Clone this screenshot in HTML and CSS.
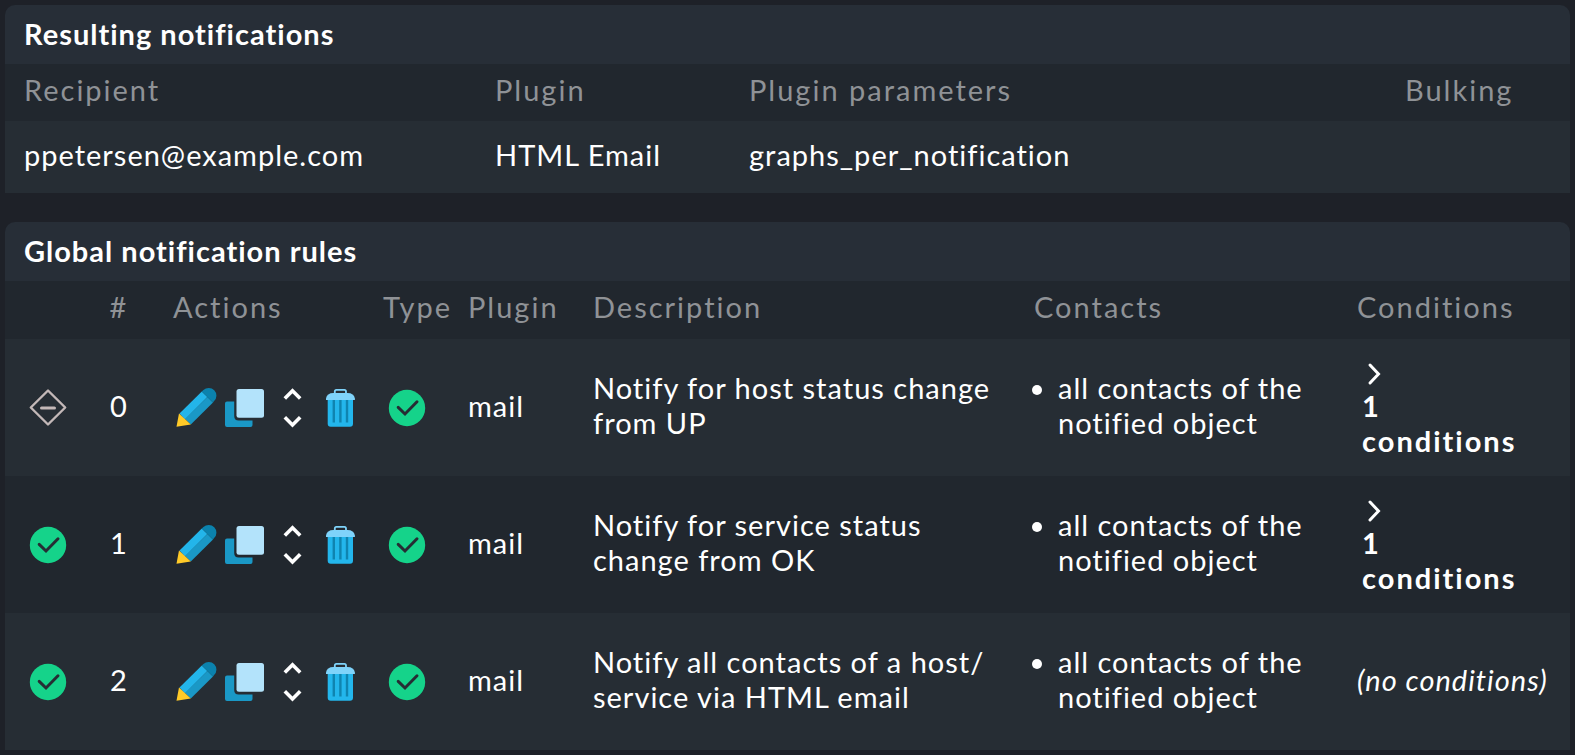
FILE: index.html
```
<!DOCTYPE html>
<html lang="en">
<head>
    <meta charset="UTF-8">
    <meta name="viewport" content="width=device-width, initial-scale=1.0">
    <title>Notification rules</title>
    <link rel="stylesheet" href="styles.css">
</head>
<body>

<!-- Icon definitions -->
<svg class="sprite" aria-hidden="true">
    <symbol id="icon-disabled" viewBox="0 0 48 48">
        <path d="M24 6.5 41.2 23.5 24 40.5 6.8 23.5Z" fill="none" stroke="#c3b8b8" stroke-width="2.4" stroke-linejoin="round"/>
        <path d="M17.5 24H30.5" stroke="#c3b8b8" stroke-width="3" stroke-linecap="round"/>
    </symbol>
    <symbol id="icon-ok" viewBox="0 0 48 48">
        <circle cx="24" cy="24" r="18.2" fill="#15d38a"/>
        <path d="M15.2 23.4 22 30 34 17.8" fill="none" stroke="#262d34" stroke-width="3" stroke-linecap="round" stroke-linejoin="miter"/>
    </symbol>
    <symbol id="icon-edit" viewBox="0 0 48 48">
        <path d="M6.5 29.5 28.8 7.5 34.4 13 12 35.5Z" fill="#23b5ea"/>
        <path d="M34.4 13 40 18.6 17.8 40.5 12 35Z" fill="#1a98c6"/>
        <path d="M28.8 7.5 30.4 6.1A7.4 7.4 0 0 1 41.1 17.1L40 18.6Z" fill="#0b82ad"/>
        <path d="M3.5 42.8 6 29.5 17.8 40.5Z" fill="#ffca28"/>
    </symbol>
    <symbol id="icon-clone" viewBox="0 0 48 48">
        <path d="M6 17.5H13.2V32Q13.2 36.5 17.7 36.5H31.5V41Q31.5 43 29.5 43H6Q4 43 4 41V19.5Q4 17.5 6 17.5Z" fill="#1a98c6"/>
        <rect x="15.5" y="5" width="27.5" height="28.8" rx="2.5" fill="#b3e3fb"/>
    </symbol>
    <symbol id="icon-move" viewBox="0 0 48 48">
        <path d="M15.8 14.5 23.5 6.8 31.2 14.5M15.8 33.2 23.5 40.9 31.2 33.2" fill="none" stroke="#ffffff" stroke-width="3.6"/>
    </symbol>
    <symbol id="icon-delete" viewBox="0 0 48 48">
        <path d="M10.7 15H36V39.7Q36 42.7 33 42.7H13.7Q10.7 42.7 10.7 39.7Z" fill="#23b6ec"/>
        <path d="M16.8 15V38.4M23.4 15V38.4M30 15V38.4" stroke="#0f84b0" stroke-width="2.4"/>
        <path d="M17.8 9.4V7.4Q17.8 5.8 19.4 5.8H27.4Q29 5.8 29 7.4V9.4" fill="none" stroke="#7fd3fa" stroke-width="1.8"/>
        <path d="M9 16V14.4Q10 8.9 16.3 8.9H30.5Q36.9 8.9 37.9 14.4V16Z" fill="#7fd3fa"/>
    </symbol>
    <symbol id="icon-fold" viewBox="0 0 24 35">
        <path d="M8 12 16.5 21 8 30" fill="none" stroke="#ffffff" stroke-width="3" stroke-linecap="round"/>
    </symbol>
</svg>

<main class="page">
    <section class="panel">
        <h2 class="panel-title">Resulting notifications</h2>
        <table class="data">
            <colgroup>
                <col>
                <col class="col-result-plugin">
                <col class="col-parameters">
                <col class="col-bulking">
            </colgroup>
            <thead>
                <tr>
                    <th>Recipient</th>
                    <th>Plugin</th>
                    <th>Plugin parameters</th>
                    <th>Bulking</th>
                </tr>
            </thead>
            <tbody class="results">
                <tr>
                    <td>ppetersen@example.com</td>
                    <td>HTML Email</td>
                    <td>graphs_per_notification</td>
                    <td></td>
                </tr>
            </tbody>
        </table>
    </section>

    <section class="panel">
        <h2 class="panel-title">Global notification rules</h2>
        <table class="data rules-table">
            <colgroup>
                <col class="col-state">
                <col class="col-number">
                <col class="col-actions">
                <col class="col-type">
                <col class="col-plugin">
                <col>
                <col class="col-contacts">
                <col class="col-conditions">
            </colgroup>
            <thead>
                <tr>
                    <th></th>
                    <th class="number">#</th>
                    <th>Actions</th>
                    <th>Type</th>
                    <th>Plugin</th>
                    <th>Description</th>
                    <th>Contacts</th>
                    <th>Conditions</th>
                </tr>
            </thead>
            <tbody class="rules">
                <tr>
                    <td class="icons state"><svg class="icon" role="img" aria-label="Disabled"><use href="#icon-disabled"/></svg></td>
                    <td class="number">0</td>
                    <td class="icons">
                        <div class="actions">
                            <button type="button" aria-label="Edit"><svg class="icon"><use href="#icon-edit"/></svg></button>
                            <button type="button" aria-label="Clone"><svg class="icon"><use href="#icon-clone"/></svg></button>
                            <button type="button" aria-label="Move"><svg class="icon"><use href="#icon-move"/></svg></button>
                            <button type="button" aria-label="Delete"><svg class="icon"><use href="#icon-delete"/></svg></button>
                        </div>
                    </td>
                    <td class="icons"><svg class="icon" role="img" aria-label="Notify"><use href="#icon-ok"/></svg></td>
                    <td>mail</td>
                    <td>Notify for host status change from UP</td>
                    <td><ul class="contacts"><li>all contacts of the notified object</li></ul></td>
                    <td>
                        <button type="button" class="fold">
                            <svg class="fold-arrow" aria-hidden="true"><use href="#icon-fold"/></svg>
                            <b>1<br>conditions</b>
                        </button>
                    </td>
                </tr>
                <tr>
                    <td class="icons state"><svg class="icon" role="img" aria-label="Enabled"><use href="#icon-ok"/></svg></td>
                    <td class="number">1</td>
                    <td class="icons">
                        <div class="actions">
                            <button type="button" aria-label="Edit"><svg class="icon"><use href="#icon-edit"/></svg></button>
                            <button type="button" aria-label="Clone"><svg class="icon"><use href="#icon-clone"/></svg></button>
                            <button type="button" aria-label="Move"><svg class="icon"><use href="#icon-move"/></svg></button>
                            <button type="button" aria-label="Delete"><svg class="icon"><use href="#icon-delete"/></svg></button>
                        </div>
                    </td>
                    <td class="icons"><svg class="icon" role="img" aria-label="Notify"><use href="#icon-ok"/></svg></td>
                    <td>mail</td>
                    <td>Notify for service status change from OK</td>
                    <td><ul class="contacts"><li>all contacts of the notified object</li></ul></td>
                    <td>
                        <button type="button" class="fold">
                            <svg class="fold-arrow" aria-hidden="true"><use href="#icon-fold"/></svg>
                            <b>1<br>conditions</b>
                        </button>
                    </td>
                </tr>
                <tr>
                    <td class="icons state"><svg class="icon" role="img" aria-label="Enabled"><use href="#icon-ok"/></svg></td>
                    <td class="number">2</td>
                    <td class="icons">
                        <div class="actions">
                            <button type="button" aria-label="Edit"><svg class="icon"><use href="#icon-edit"/></svg></button>
                            <button type="button" aria-label="Clone"><svg class="icon"><use href="#icon-clone"/></svg></button>
                            <button type="button" aria-label="Move"><svg class="icon"><use href="#icon-move"/></svg></button>
                            <button type="button" aria-label="Delete"><svg class="icon"><use href="#icon-delete"/></svg></button>
                        </div>
                    </td>
                    <td class="icons"><svg class="icon" role="img" aria-label="Notify"><use href="#icon-ok"/></svg></td>
                    <td>mail</td>
                    <td>Notify all contacts of a host/<wbr>service via HTML email</td>
                    <td><ul class="contacts"><li>all contacts of the notified object</li></ul></td>
                    <td><i>(no conditions)</i></td>
                </tr>
            </tbody>
        </table>
    </section>
</main>

</body>
</html>
```
FILE: styles.css
```
body {
    margin: 0;
    background-color: #1e2128;
    color: #ffffff;
    font-family: Lato, sans-serif;
    font-size: 29px;
    line-height: 35px;
    letter-spacing: 1px;
}
.sprite {
    display: none;
}
.page {
    display: flex;
    flex-direction: column;
    gap: 29px;
    padding: 5px;
}
.panel {
    border-radius: 10px 10px 0 0;
    overflow: hidden;
}
.panel-title {
    margin: 0;
    padding: 11px 19px 13px;
    background-color: #272e37;
    font-size: 29px;
    font-weight: bold;
}
.data {
    width: 100%;
    table-layout: fixed;
    border-collapse: collapse;
}
.data th,
.data td {
    padding: 0 8px 5px;
    text-align: left;
    vertical-align: middle;
}
.data th {
    height: 50px;
    padding-bottom: 7px;
    background-color: #21272e;
    color: #8f9296;
    font-weight: normal;
    letter-spacing: 2px;
}
.rules-table th {
    height: 51px;
}
.data th:first-child,
.data td:first-child {
    padding-left: 19px;
}
.data .number {
    text-align: center;
}
.data .icons {
    padding-bottom: 0;
}
.data .state {
    padding-right: 0;
}
.results tr {
    height: 72px;
    background-color: #262d34;
}
.rules tr {
    height: 137px;
    background-color: #262d34;
}
.rules tr:nth-child(even) {
    background-color: #21272e;
}
.col-result-plugin {
    width: 254px;
}
.col-parameters {
    width: 656px;
}
.col-bulking {
    width: 173px;
}
.col-state {
    width: 68px;
}
.col-number {
    width: 92px;
}
.col-actions {
    width: 210px;
}
.col-type {
    width: 85px;
}
.col-plugin {
    width: 125px;
}
.col-contacts {
    width: 323px;
}
.col-conditions {
    width: 221px;
}
.icon {
    display: block;
    width: 48px;
    height: 48px;
}
.actions {
    display: flex;
}
button {
    padding: 0;
    border: none;
    background: none;
    color: inherit;
    font: inherit;
    letter-spacing: inherit;
    text-align: left;
    cursor: pointer;
}
.fold {
    display: block;
    padding-left: 5px;
    letter-spacing: 2px;
}
.fold-arrow {
    display: block;
    width: 24px;
    height: 35px;
}
.contacts {
    margin: 0;
    padding-left: 24px;
}
```
